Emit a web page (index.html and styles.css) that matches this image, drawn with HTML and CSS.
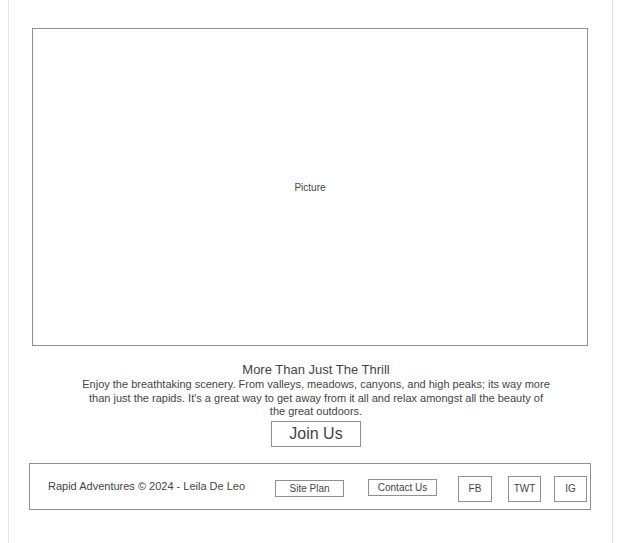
FILE: index.html
```html
<!DOCTYPE html>
<html>
<head>
<meta charset="utf-8">
<link rel="stylesheet" href="styles.css">
</head>
<body>
<div class="page">
  <div class="picture">Picture</div>
  <section class="intro">
    <h2 class="title">More Than Just The Thrill</h2>
    <p class="text">Enjoy the breathtaking scenery. From valleys, meadows, canyons, and high peaks; its way more than just the rapids. It's a great way to get away from it all and relax amongst all the beauty of the great outdoors.</p>
    <div class="join">Join Us</div>
  </section>
  <footer class="footer">
    <span class="copy">Rapid Adventures © 2024 - Leila De Leo</span>
    <span class="btn site">Site Plan</span>
    <span class="btn contact">Contact Us</span>
    <span class="social fb">FB</span>
    <span class="social twt">TWT</span>
    <span class="social ig">IG</span>
  </footer>
</div>
</body>
</html>
```

FILE: styles.css
```css
html, body {
  margin: 0;
  padding: 0;
  background: #fff;
}
body {
  padding: 0 8px;
  font-family: "Liberation Sans", Arial, sans-serif;
  color: #444;
}
.page {
  box-sizing: border-box;
  width: 605px;
  min-height: 543px;
  border-left: 1px solid #e6e6e6;
  border-right: 1px solid #e6e6e6;
  padding-top: 28px;
}
.picture {
  box-sizing: border-box;
  margin: 0 0 0 23px;
  width: 556px;
  height: 318px;
  border: 1px solid #909090;
  display: flex;
  align-items: center;
  justify-content: center;
  font-size: 10px;
  color: #444;
}
.intro {
  width: 556px;
  margin-left: 29px;
  display: flex;
  flex-direction: column;
  align-items: center;
  padding-top: 15px;
}
.title {
  margin: 0;
  font-weight: normal;
  font-size: 13px;
  line-height: 17px;
  color: #444;
}
.text {
  margin: 0;
  width: 470px;
  text-align: center;
  font-size: 11px;
  line-height: 13.5px;
  color: #444;
}
.join {
  box-sizing: border-box;
  margin-top: 2px;
  width: 90px;
  height: 26px;
  border: 1px solid #909090;
  font-size: 16px;
  line-height: 24px;
  text-align: center;
  color: #444;
}
.footer {
  box-sizing: border-box;
  margin: 16px 0 0 20px;
  width: 562px;
  height: 47px;
  border: 1px solid #909090;
  display: flex;
  align-items: flex-start;
  padding-left: 18px;
}
.copy {
  font-size: 11px;
  line-height: 14px;
  color: #444;
  width: 227px;
  margin-top: 15px;
}
.btn {
  box-sizing: border-box;
  width: 69px;
  height: 17px;
  border: 1px solid #909090;
  font-size: 10px;
  line-height: 15px;
  text-align: center;
  color: #444;
}
.site { margin-top: 16px; }
.contact { margin-left: 24px; margin-top: 15px; }
.social {
  box-sizing: border-box;
  width: 34px;
  height: 26px;
  border: 1px solid #909090;
  font-size: 10px;
  line-height: 24px;
  text-align: center;
  color: #444;
  margin-top: 12px;
}
.fb { margin-left: 21px; }
.twt { margin-left: 16px; width: 33px; }
.ig { margin-left: 13px; width: 33px; }
```
